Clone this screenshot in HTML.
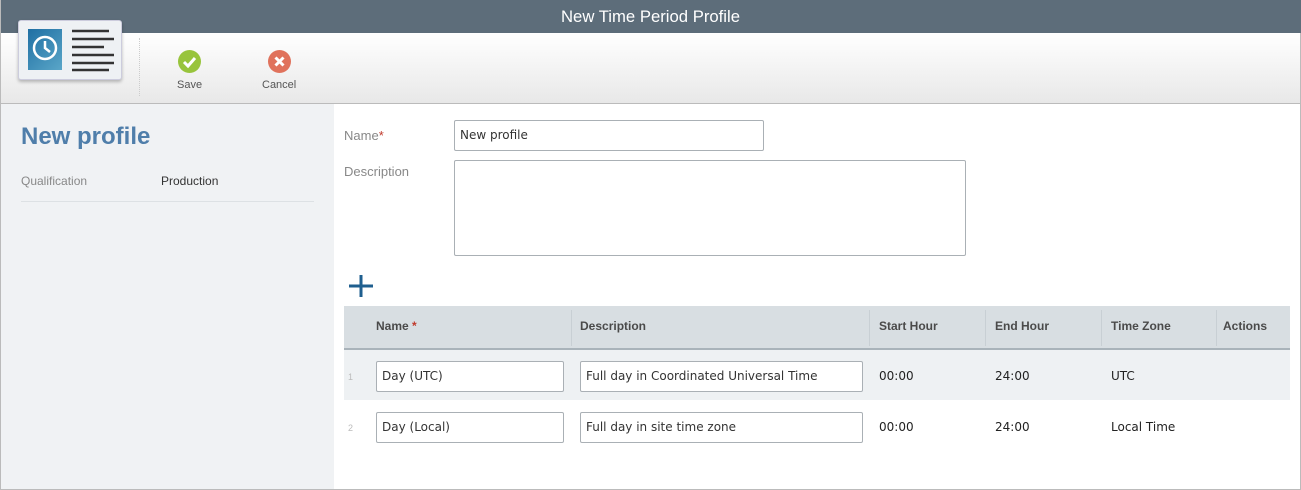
<!DOCTYPE html><html><head><style>
body{margin:0;width:1301px;height:490px;overflow:hidden;font-family:"Liberation Sans",sans-serif;background:#fff;position:relative}
.a{position:absolute}
.inp{position:absolute;border:1px solid #aab0b5;background:#fff;font-family:"DejaVu Sans",sans-serif;font-size:12px;color:#333;box-sizing:border-box;padding-left:5px;border-radius:2px}
.th{position:absolute;top:306px;height:43px;line-height:41px;font-size:12px;color:#4a4a4a;font-weight:bold}
.td{position:absolute;font-family:"DejaVu Sans",sans-serif;font-size:12px;color:#222}
.sep{position:absolute;top:310px;height:36px;width:1px;background:#c8cfd4}
</style></head><body>
<div class="a" style="left:0;top:0;width:1301px;height:33px;background:#5d6d7a;color:#fff;font-size:16.7px;text-align:center;line-height:33px">New Time Period Profile</div>
<div class="a" style="left:0;top:33px;width:1301px;height:70px;background:linear-gradient(#fff,#e8e8e8);border-bottom:1px solid #bbb"></div>
<div class="a" style="left:18px;top:20px;width:102px;height:58px;background:#eef1f4;border:1px solid #ccd;border-radius:3px;box-shadow:0 2px 3px rgba(0,0,0,.25)"></div>
<div class="a" style="left:28px;top:29px;width:34px;height:41px;background:linear-gradient(135deg,#1f6fa3,#5aa6c8)"></div>
<svg class="a" style="left:31px;top:34px" width="28" height="28"><circle cx="14" cy="14" r="11" fill="none" stroke="#fff" stroke-width="2.5"/><path d="M14 7v7l5 4" fill="none" stroke="#fff" stroke-width="2.5"/></svg>
<svg class="a" style="left:70px;top:29px" width="44" height="43" stroke="#333" stroke-width="2.5"><path d="M2 2h37M2 10h42M2 18h32M2 26h42M2 34h42M2 41h37"/></svg>
<div class="a" style="left:139px;top:38px;width:1px;height:58px;border-left:1px dotted #ccc"></div>
<svg class="a" style="left:178px;top:50px" width="23" height="23"><circle cx="11.5" cy="11.5" r="11.5" fill="#98c43c"/><path d="M6 12l4 4 7-8" fill="none" stroke="#fff" stroke-width="3"/></svg>
<div class="a" style="left:177px;top:79px;font-size:11px;color:#555">Save</div>
<svg class="a" style="left:268px;top:50px" width="23" height="23"><circle cx="11.5" cy="11.5" r="11.5" fill="#e0725c"/><path d="M7.5 7.5l8 8M15.5 7.5l-8 8" stroke="#fff" stroke-width="3"/></svg>
<div class="a" style="left:262px;top:79px;font-size:11px;color:#555">Cancel</div>
<div class="a" style="left:0;top:104px;width:334px;height:386px;background:#f0f2f4"></div>
<div class="a" style="left:21px;top:123px;font-size:24px;font-weight:bold;color:#4f7eaa">New profile</div>
<div class="a" style="left:21px;top:174px;font-size:12px;color:#888">Qualification</div>
<div class="a" style="left:161px;top:174px;font-size:12px;color:#333">Production</div>
<div class="a" style="left:21px;top:201px;width:293px;height:1px;background:#dde1e4"></div>
<div class="a" style="left:1300px;top:33px;width:1px;height:457px;background:#bbb"></div>
<div class="a" style="left:0;top:489px;width:1301px;height:1px;background:#bbb"></div>
<div class="a" style="left:0;top:0;width:1px;height:490px;background:#bbb"></div>
<div class="a" style="left:344px;top:128px;font-size:13px;color:#888">Name<span style="color:#c0392b">*</span></div>
<div class="inp" style="left:454px;top:120px;width:310px;height:31px;line-height:29px">New profile</div>
<div class="a" style="left:344px;top:164px;font-size:13px;color:#888">Description</div>
<div class="inp" style="left:454px;top:160px;width:512px;height:96px"></div>
<svg class="a" style="left:348px;top:274px" width="26" height="24"><path d="M13 1v22M1 12h24" stroke="#1f5f8f" stroke-width="3"/></svg>
<div class="a" style="left:344px;top:306px;width:946px;height:42px;background:#d8dee2;border-bottom:2px solid #a9b3ba"></div>
<div class="th" style="left:376px">Name <span style="color:#c0392b">*</span></div>
<div class="sep" style="left:571px"></div><div class="th" style="left:580px">Description</div>
<div class="sep" style="left:869px"></div><div class="th" style="left:879px">Start Hour</div>
<div class="sep" style="left:985px"></div><div class="th" style="left:995px">End Hour</div>
<div class="sep" style="left:1101px"></div><div class="th" style="left:1111px">Time Zone</div>
<div class="sep" style="left:1216px"></div><div class="th" style="left:1223px">Actions</div>
<div class="a" style="left:344px;top:350px;width:946px;height:50px;background:#eef1f3"></div>
<div class="a" style="left:348px;top:372px;font-size:9px;color:#bbb">1</div>
<div class="inp" style="left:376px;top:361px;width:188px;height:31px;line-height:29px">Day (UTC)</div>
<div class="inp" style="left:580px;top:361px;width:283px;height:31px;line-height:29px">Full day in Coordinated Universal Time</div>
<div class="td" style="left:879px;top:369px">00:00</div><div class="td" style="left:995px;top:369px">24:00</div><div class="td" style="left:1111px;top:369px">UTC</div>
<div class="a" style="left:348px;top:423px;font-size:9px;color:#bbb">2</div>
<div class="inp" style="left:376px;top:412px;width:188px;height:31px;line-height:29px">Day (Local)</div>
<div class="inp" style="left:580px;top:412px;width:283px;height:31px;line-height:29px">Full day in site time zone</div>
<div class="td" style="left:879px;top:420px">00:00</div><div class="td" style="left:995px;top:420px">24:00</div><div class="td" style="left:1111px;top:420px">Local Time</div>
</body></html>
